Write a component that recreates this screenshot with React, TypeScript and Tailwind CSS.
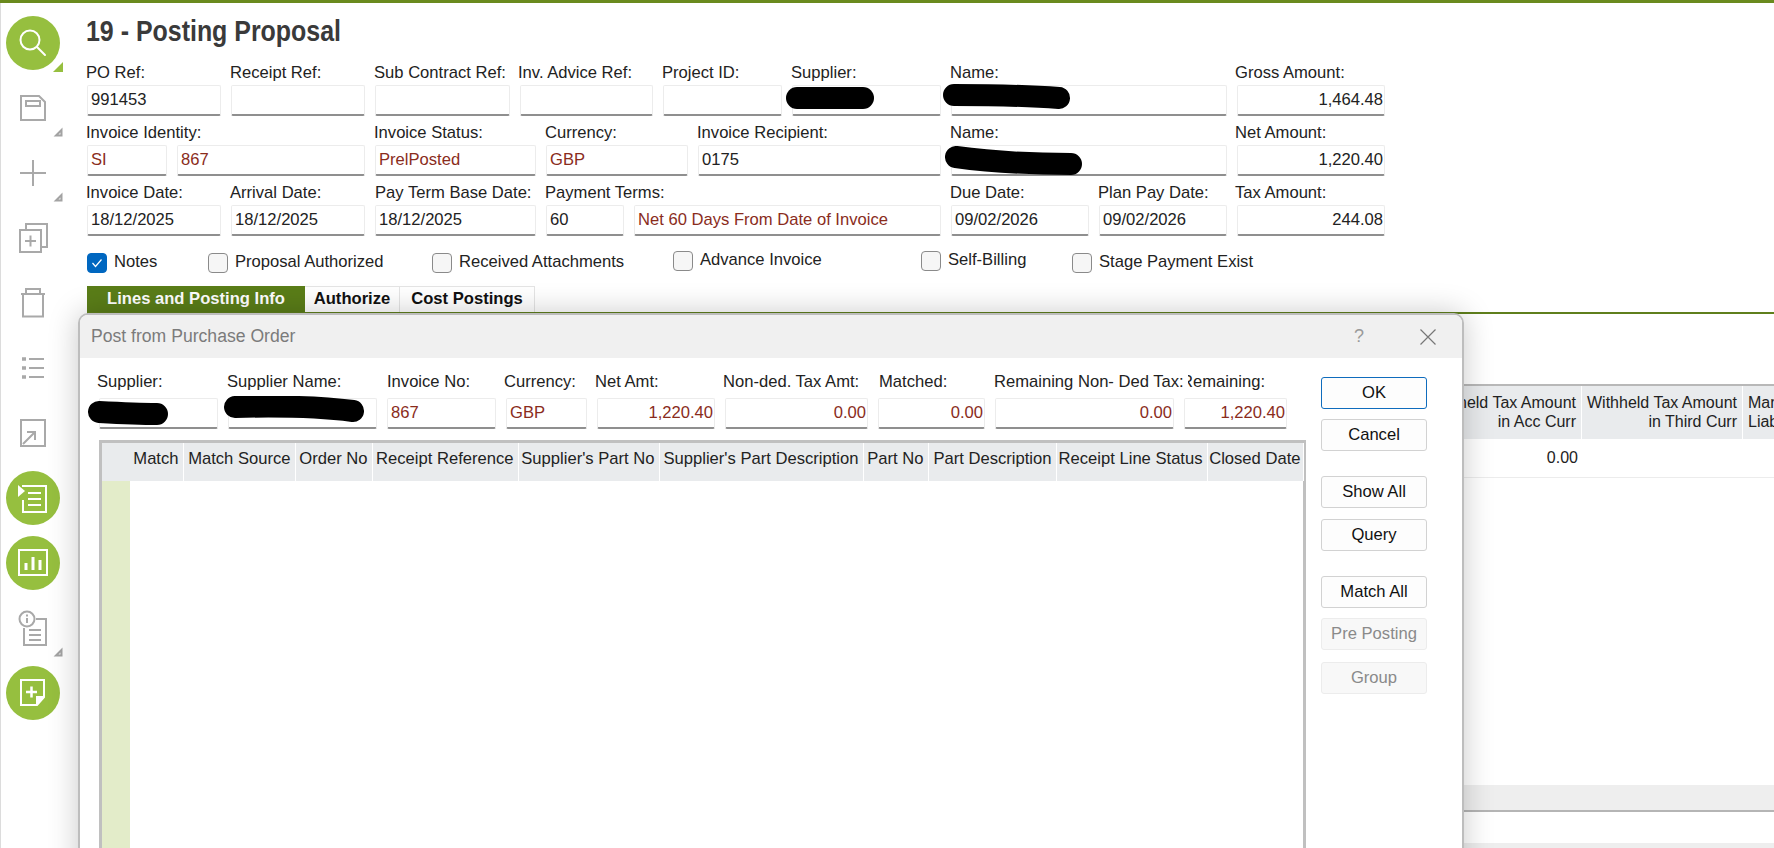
const red = "text-[#8a2c1c]";

function Triangle({ green }: { green?: boolean }) {
  return (
    <svg width="10" height="10" viewBox="0 0 10 10" className="absolute bottom-[3px] right-[2px]">
      {green ? (
        <path d="M10 0V10H0Z" fill="#96bf3f" />
      ) : (
        <path d="M8.500 3V8.500H3Z" fill="#eee" stroke="#a3a3a3" strokeWidth="2" />
      )}
    </svg>
  );
}

function Circle({ children }: { children: React.ReactNode }) {
  return (
    <div className="flex h-[54px] w-[54px] items-center justify-center rounded-full bg-[#96bf3f]">
      <svg width="54" height="54" viewBox="0 0 54 54" fill="none" stroke="#fff" strokeWidth="2">
        {children}
      </svg>
    </div>
  );
}

function GrayIcon({ w, h, children }: { w: number; h: number; children: React.ReactNode }) {
  return (
    <svg width={w} height={h} viewBox={`0 0 ${w} ${h}`} fill="none" stroke="#a9a9a9" strokeWidth="2">
      {children}
    </svg>
  );
}

function Sidebar() {
  const slot = "relative flex h-[65px] w-[64px] items-center justify-center";
  return (
    <aside className="w-[80px] shrink-0 border-l border-[#dcdcdc] pt-[7px]">
      <div className={slot}>
        <Circle>
          <circle cx="24" cy="24" r="9.500" />
          <path d="M31 31L39 39" strokeLinecap="round" />
        </Circle>
        <Triangle green />
      </div>
      <div className={slot}>
        <GrayIcon w={26} h={26}>
          <path d="M1 1H19L25 7V25H1Z" />
          <rect x="6" y="6" width="14" height="5" />
        </GrayIcon>
        <Triangle />
      </div>
      <div className={slot}>
        <GrayIcon w={26} h={26}>
          <path d="M13 0V26M0 13H26" />
        </GrayIcon>
        <Triangle />
      </div>
      <div className={slot}>
        <GrayIcon w={29} h={30}>
          <path d="M7 7V1H28V24H22" />
          <rect x="1" y="7" width="21" height="22" />
          <path d="M6 18H17M11.500 12.500V23.500" />
        </GrayIcon>
      </div>
      <div className={slot}>
        <GrayIcon w={24} h={30}>
          <path d="M0 6H24M5 6V1H19V6M2 6V28.500H22V6" />
        </GrayIcon>
      </div>
      <div className={slot}>
        <GrayIcon w={22} h={22}>
          <path d="M7 2H22M7 11H22M7 20H22" />
          <path d="M0 2H4M0 11H4M0 20H4" strokeWidth="3.500" />
        </GrayIcon>
      </div>
      <div className={slot}>
        <GrayIcon w={26} h={28}>
          <rect x="1" y="1" width="24" height="26" />
          <path d="M3 25L15 13M7 13H15V21" />
        </GrayIcon>
      </div>
      <div className={slot}>
        <Circle>
          <path d="M16 15H40V41H17V29" />
          <path d="M22 22H35M22 28H35M22 34H35" />
          <path d="M12 14L19 20L12 26Z" fill="#fff" stroke="none" />
        </Circle>
      </div>
      <div className={slot}>
        <Circle>
          <rect x="13" y="14" width="28" height="25" />
          <path d="M20 27V34M27 21V34M34 24V34" strokeWidth="3" />
        </Circle>
      </div>
      <div className={slot}>
        <GrayIcon w={30} h={36}>
          <circle cx="9" cy="9" r="7.500" />
          <path d="M9 8V13M9 4.500V6.500" />
          <path d="M18 9H28V35H6V18" />
          <path d="M11 20H23M11 25H23M11 30H23" />
        </GrayIcon>
        <Triangle />
      </div>
      <div className={slot}>
        <Circle>
          <path d="M15 14H38V31L31 39H15Z" />
          <path d="M31 39V31H38" fill="#fff" />
          <path d="M20 26H31M25.500 20.500V31.500" strokeWidth="2.500" />
        </Circle>
      </div>
    </aside>
  );
}

function Field({
  label,
  value,
  width,
  tone,
  right,
  labelGap = "mb-[1px]",
  labelClass = "-ml-[1px]",
}: {
  label?: string;
  value?: string;
  width: string;
  tone?: string;
  right?: boolean;
  labelGap?: string;
  labelClass?: string;
}) {
  return (
    <div className={`shrink-0 ${width}`}>
      <div className={`h-[23px] whitespace-nowrap leading-[23px] text-[#222] ${labelGap} ${labelClass}`}>{label}</div>
      <div
        className={`h-[31px] rounded-[2px] border border-[#ececec] border-b-2 border-b-[#8f8f8f] bg-white leading-[27px] ${tone ?? "text-[#222]"} ${
          right ? "pr-[1px] text-right" : "pl-[3px]"
        }`}
      >
        {value}
      </div>
    </div>
  );
}

function Check({ label, width, on, up }: { label: string; width: string; on?: boolean; up?: boolean }) {
  return (
    <div className={`flex shrink-0 items-center gap-[7px] ${width} ${up ? "" : "mt-[2px]"}`}>
      <div
        className={`flex h-[20px] w-[20px] items-center justify-center rounded-[4px] border ${
          on ? "border-[#0067c0] bg-[#0067c0]" : "border-[#8a8a8a] bg-[#f6f6f6]"
        }`}
      >
        {on && (
          <svg width="12" height="10" viewBox="0 0 12 10" fill="none" stroke="#fff" strokeWidth="1.200">
            <path d="M1.500 5L4.500 8.500L10.500 1.500" />
          </svg>
        )}
      </div>
      <span className="-mt-[2px] whitespace-nowrap text-[#222]">{label}</span>
    </div>
  );
}

function DialogButton({ label, primary, disabled, className = "" }: { label: string; primary?: boolean; disabled?: boolean; className?: string }) {
  return (
    <div
      className={`flex h-[32px] w-[106px] items-center justify-center rounded-[3px] border ${className} ${
        primary
          ? "border-[#0f6cbd] bg-[#fdfdfd] text-[#111]"
          : disabled
            ? "border-[#ececec] bg-[#f8f8f8] text-[#8a8a8a]"
            : "border-[#d2d2d2] bg-[#fdfdfd] text-[#111]"
      }`}
    >
      {label}
    </div>
  );
}

const gridColumns = [
  { label: "Match", width: "w-[53.500px] pr-[4px]" },
  { label: "Match Source", width: "w-[112px] pr-[4px]" },
  { label: "Order No", width: "w-[77px] pr-[4px]" },
  { label: "Receipt Reference", width: "w-[146px] pr-[4px]" },
  { label: "Supplier's Part No", width: "w-[141px] pr-[4px]" },
  { label: "Supplier's Part Description", width: "w-[204px] pr-[4px]" },
  { label: "Part No", width: "w-[65px] pr-[4px]" },
  { label: "Part Description", width: "w-[128px] pr-[4px]" },
  { label: "Receipt Line Status", width: "w-[151px] pr-[4px]" },
  { label: "Closed Date", width: "w-[96px] pr-[2px]" },
];

function PostDialog() {
  const gap = "mb-[5px]";
  return (
    <div className="absolute left-[78px] top-[313px] flex h-[600px] w-[1386px] flex-col rounded-t-[10px] border-2 border-[#bdbdbd] bg-white shadow-[0_0_30px_rgba(0,0,0,0.22)]">
      <div className="flex h-[43px] shrink-0 items-center justify-between rounded-t-[8px] bg-[#f0f0f0] pl-[11px] pr-[25px] text-[17.600px] text-[#7b7b7b]">
        <span>Post from Purchase Order</span>
        <div className="flex items-center gap-[55px]">
          <span className="text-[18px] text-[#9a9a9a]">?</span>
          <svg width="18" height="18" viewBox="0 0 18 18" fill="none" stroke="#777" strokeWidth="1.200">
            <path d="M1.500 1.500L16.500 16.500M16.500 1.500L1.500 16.500" />
          </svg>
        </div>
      </div>
      <div className="flex min-h-0 flex-1">
        <div className="w-[1226px] shrink-0 pl-[19px] pt-[12px]">
          <div className="flex gap-[10px]">
            <Field label="Supplier:" width="w-[119px]" labelGap={gap} labelClass="-ml-[2px]" />
            <Field label="Supplier Name:" width="w-[149px]" labelGap={gap} labelClass="-ml-[1px]" />
            <Field label="Invoice No:" value="867" tone={red} width="w-[109px]" labelGap={gap} labelClass="" />
            <Field label="Currency:" value="GBP" tone={red} width="w-[81px]" labelGap={gap} labelClass="-ml-[2px]" />
            <Field label="Net Amt:" value="1,220.40" tone={red} right width="w-[118px]" labelGap={gap} labelClass="-ml-[2px]" />
            <Field label="Non-ded. Tax Amt:" value="0.00" tone={red} right width="w-[143px]" labelGap={gap} labelClass="-ml-[2px]" />
            <Field label="Matched:" value="0.00" tone={red} right width="w-[107px]" labelGap={gap} labelClass="ml-[1px]" />
            <Field label="Remaining Non- Ded Tax:" value="0.00" tone={red} right width="w-[179px]" labelGap={gap} labelClass="-ml-[1px]" />
            <div className="w-[103px] shrink-0">
              <div className="mb-[5px] ml-[4px] flex h-[23px] w-[77px] justify-end overflow-hidden whitespace-nowrap leading-[23px] text-[#222]">
                Remaining:
              </div>
              <div className={`h-[31px] rounded-[2px] border border-[#ececec] border-b-2 border-b-[#8f8f8f] bg-white pr-[1px] text-right leading-[27px] ${red}`}>
                1,220.40
              </div>
            </div>
          </div>
          <div className="mt-[11px] h-[500px] w-[1207px] border-[3px] border-[#c0c0c0] bg-white">
            <div className="flex h-[38px] bg-[#e9ebed]">
              <div className="w-[28px] shrink-0" />
              {gridColumns.map((c) => (
                <div
                  key={c.label}
                  className={`${c.width} shrink-0 whitespace-nowrap border-r border-white text-right leading-[32px] text-[#222]`}
                >
                  {c.label}
                </div>
              ))}
            </div>
            <div className="h-full w-[28px] bg-[#e3ecc9]" />
          </div>
        </div>
        <div className="ml-[15px] flex flex-col pt-[19px]">
          <DialogButton label="OK" primary />
          <DialogButton label="Cancel" className="mt-[10px]" />
          <DialogButton label="Show All" className="mt-[25px]" />
          <DialogButton label="Query" className="mt-[11px]" />
          <DialogButton label="Match All" className="mt-[25px]" />
          <DialogButton label="Pre Posting" disabled className="mt-[10px]" />
          <DialogButton label="Group" disabled className="mt-[12px]" />
        </div>
      </div>
    </div>
  );
}

function Redaction({ className, w, h, d }: { className: string; w: number; h: number; d: string }) {
  return (
    <svg width={w} height={h} viewBox={`0 0 ${w} ${h}`} className={`absolute ${className}`} fill="none" stroke="#000" strokeWidth="22" strokeLinecap="round" strokeLinejoin="round">
      <path d={d} />
    </svg>
  );
}

export default function App() {
  return (
    <div className="relative h-[848px] w-[1774px] overflow-hidden bg-white text-[16.600px] [font-family:'Liberation_Sans',Arial,sans-serif]">
      <div className="h-[3px] bg-[#6a8a1e]" />
      <div className="flex">
        <Sidebar />
        <main className="min-w-0 flex-1 pl-[7px]">
          <h1 className="-ml-[1px] flex h-[58px] items-center whitespace-nowrap text-[29px] font-bold text-[#3a3a3a]">
            <span className="inline-block origin-left scale-x-[0.86]">19 - Posting Proposal</span>
          </h1>
          <div className="flex gap-[10px]">
            <Field label="PO Ref:" value="991453" width="w-[134px]" />
            <Field label="Receipt Ref:" width="w-[134px]" />
            <Field label="Sub Contract Ref:" width="w-[135px]" />
            <Field label="Inv. Advice Ref:" width="w-[133px]" labelClass="-ml-[2px]" />
            <Field label="Project ID:" width="w-[119px]" />
            <Field label="Supplier:" width="w-[149px]" />
            <Field label="Name:" width="w-[276px]" />
            <Field label="Gross Amount:" value="1,464.48" right width="w-[148px]" labelClass="-ml-[2px]" />
          </div>
          <div className="mt-[5px] flex gap-[10px]">
            <Field label="Invoice Identity:" value="SI" tone={red} width="w-[80px]" />
            <Field value="867" tone={red} width="w-[188px]" />
            <Field label="Invoice Status:" value="PrelPosted" tone={red} width="w-[161px]" />
            <Field label="Currency:" value="GBP" tone={red} width="w-[142px]" />
            <Field label="Invoice Recipient:" value="0175" width="w-[243px]" />
            <Field label="Name:" width="w-[276px]" />
            <Field label="Net Amount:" value="1,220.40" right width="w-[148px]" labelClass="-ml-[2px]" />
          </div>
          <div className="mt-[5px] flex gap-[10px]">
            <Field label="Invoice Date:" value="18/12/2025" width="w-[134px]" />
            <Field label="Arrival Date:" value="18/12/2025" width="w-[134px]" />
            <Field label="Pay Term Base Date:" value="18/12/2025" width="w-[161px]" labelClass="" />
            <Field label="Payment Terms:" value="60" width="w-[78px]" />
            <Field value="Net 60 Days From Date of Invoice" tone={red} width="w-[307px]" />
            <Field label="Due Date:" value="09/02/2026" width="w-[138px]" />
            <Field label="Plan Pay Date:" value="09/02/2026" width="w-[128px]" />
            <Field label="Tax Amount:" value="244.08" right width="w-[148px]" labelClass="-ml-[2px]" />
          </div>
          <div className="mt-[14px] flex h-[22px] items-start">
            <Check label="Notes" on width="w-[121px]" />
            <Check label="Proposal Authorized" width="w-[224px]" />
            <Check label="Received Attachments" width="w-[241px]" />
            <Check label="Advance Invoice" up width="w-[248px]" />
            <Check label="Self-Billing" up width="w-[151px]" />
            <Check label="Stage Payment Exist" width="w-[240px]" />
          </div>
          <div className="mt-[14px] flex h-[26px] font-bold text-[#111]">
            <div className="flex w-[218px] items-center justify-center bg-[#5a7d18] text-white">Lines and Posting Info</div>
            <div className="flex w-[95px] items-center justify-center border-r border-t border-[#e4e4e4]">Authorize</div>
            <div className="flex w-[135px] items-center justify-center border-r border-t border-[#e4e4e4]">Cost Postings</div>
          </div>
          <div className="h-[2px] bg-[#5f7f1c]" />
          <div className="mt-[70px] flex h-[55px] border-t-[2px] border-[#b8b8b8] bg-[#e9ebed] pl-[1320px] text-[16px] leading-[19px] text-[#222]">
            <div className="w-[175px] shrink-0 whitespace-nowrap border-r border-white pr-[5px] pt-[7px] text-right">
              Withheld Tax Amount
              <br />
              in Acc Curr
            </div>
            <div className="w-[161px] shrink-0 whitespace-nowrap border-r border-white pr-[5px] pt-[7px] text-right">
              Withheld Tax Amount
              <br />
              in Third Curr
            </div>
            <div className="shrink-0 whitespace-nowrap pl-[5px] pt-[7px]">
              Manual
              <br />
              Liability
            </div>
          </div>
          <div className="h-[39px] border-b border-[#ececec] pl-[1320px] text-[16px]">
            <div className="w-[175px] pr-[4px] text-right leading-[38px] text-[#222]">0.00</div>
          </div>
          <div className="mt-[307px] h-[25px] bg-[#eeeeee]" />
          <div className="h-[2px] bg-[#b5b5b5]" />
          <div className="mt-[31px] h-[6px] bg-[#eeeeee]" />
        </main>
      </div>
      <PostDialog />
      <Redaction className="left-[785px] top-[86px]" w={90} h={24} d="M12 12H78" />
      <Redaction className="left-[943px] top-[84px]" w={128} h={26} d="M11 11C50 11 90 12 116 14" />
      <Redaction className="left-[945px] top-[146px]" w={138} h={30} d="M11 11C40 15 80 18 126 18" />
      <Redaction className="left-[88px] top-[400px]" w={81} h={26} d="M11 12C30 13 50 14 69 14" />
      <Redaction className="left-[224px] top-[396px]" w={141} h={28} d="M11 11C50 10 90 10 129 15" />
    </div>
  );
}
